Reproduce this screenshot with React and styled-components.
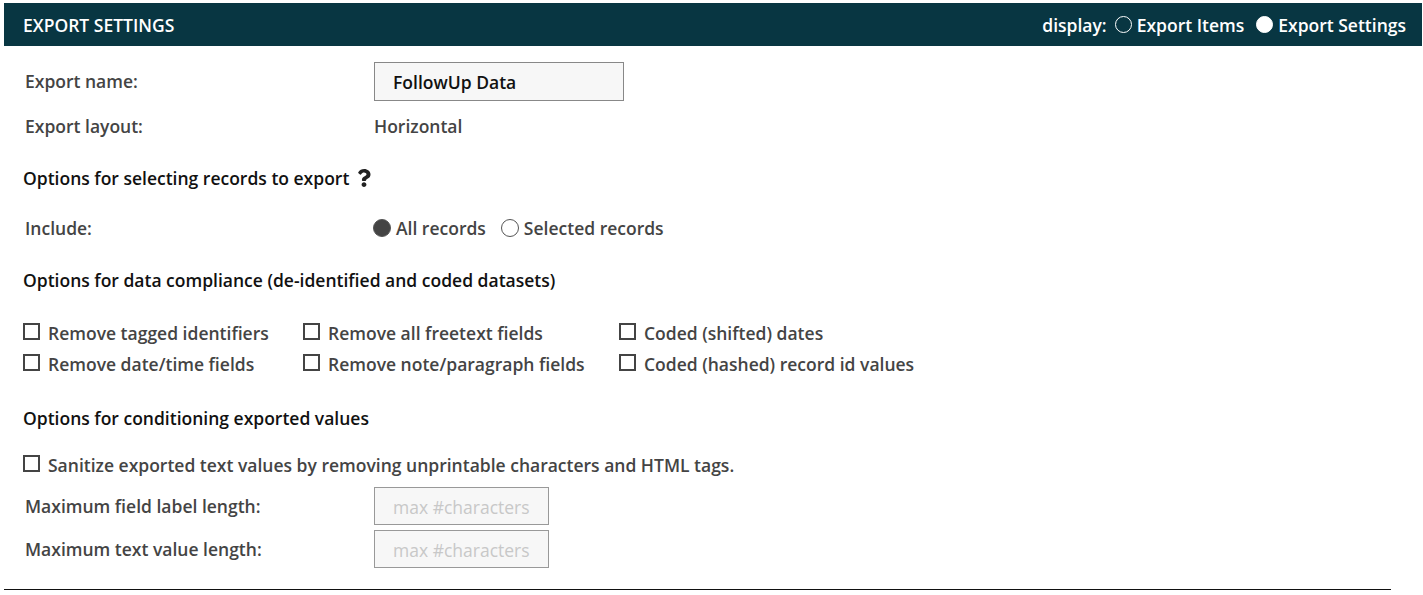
import React from 'react';
import styled, { createGlobalStyle } from 'styled-components';
import { FaQuestion } from 'react-icons/fa';

const GlobalStyle = createGlobalStyle`
    body {
        margin: 0;
        background: #fff;
        font-family: "Open Sans", "Liberation Sans", sans-serif;
    }
`;

const Page = styled.div`
    width: 1423px;
    height: 595px;
    padding: 3px 1px 0 4px;
    box-sizing: border-box;
    overflow: hidden;
`;

const Header = styled.div`
    height: 43px;
    background-color: #083642;
    color: #fff;
    display: flex;
    align-items: center;
    justify-content: space-between;
    padding: 0 16px 0 19px;
    font-size: 17.5px;
    font-weight: 600;
`;

const DisplayToggle = styled.div`
    display: flex;
    align-items: center;
`;

const Radio = styled.span`
    display: inline-block;
    width: ${p => p.$size || 17}px;
    height: ${p => p.$size || 17}px;
    border-radius: 50%;
    box-sizing: border-box;
    border: 1px solid ${p => p.$light ? '#fff' : '#555'};
    background: ${p => p.$on ? (p.$light ? '#fff' : '#444') : 'transparent'};
    margin: 0 5px 0 ${p => p.$gap || 0}px;
`;

const Body = styled.div`
    padding: 16px 0 0 19px;
    color: #444;
    font-size: 17.5px;
    font-weight: 600;
`;

const FieldRow = styled.div`
    display: flex;
    align-items: center;
    height: ${p => p.$h || 38}px;
    margin-top: ${p => p.$mt || 0}px;
    padding-left: 2px;
`;

const Label = styled.div`
    width: 349px;
`;

const TextBox = styled.div`
    width: 250px;
    height: 39px;
    box-sizing: border-box;
    border: 1px solid #888;
    background: #f7f7f7;
    display: flex;
    align-items: center;
    padding: 1px 0 0 18px;
    color: #111;
`;

const SmallBox = styled(TextBox)`
    width: 175px;
    height: 38px;
    font-weight: 500;
    color: #c8c8c8;
    border-color: #999;
`;

const SectionTitle = styled.div`
    color: #111;
    display: flex;
    align-items: center;
    height: 24px;
    margin-top: ${p => p.$mt || 0}px;
    svg {
        margin-left: 6px;
        font-size: 18px;
        color: #222;
    }
`;

const Choice = styled.label`
    display: flex;
    align-items: center;
    margin-right: ${p => p.$mr || 0}px;
`;

const CheckGrid = styled.div`
    display: grid;
    grid-template-columns: 280px 316px auto;
    row-gap: 7px;
    margin-top: 29px;
`;

const Box = styled.span`
    display: inline-block;
    width: 17px;
    height: 17px;
    box-sizing: border-box;
    border: 2px solid #444;
    margin: 0 8px 0 0;
    flex: none;
    position: relative;
    top: -2px;
`;

const Check = styled.div`
    display: flex;
    align-items: center;
    height: 24px;
    margin-top: ${p => p.$mt || 0}px;
`;

const Rule = styled.hr`
    border: none;
    border-top: 1px solid #111;
    margin: 21px 31px 0 -19px;
`;

const checks = [
    'Remove tagged identifiers',
    'Remove all freetext fields',
    'Coded (shifted) dates',
    'Remove date/time fields',
    'Remove note/paragraph fields',
    'Coded (hashed) record id values',
];

const App = () => {
    return (
        <Page>
            <GlobalStyle />
            <Header>
                <span>EXPORT SETTINGS</span>
                <DisplayToggle>
                    display:
                    <Radio $light $gap={8} />Export Items
                    <Radio $light $on $gap={12} />Export Settings
                </DisplayToggle>
            </Header>
            <Body>
                <FieldRow>
                    <Label>Export name:</Label>
                    <TextBox>FollowUp Data</TextBox>
                </FieldRow>
                <FieldRow $mt={7}>
                    <Label>Export layout:</Label>
                    <span>Horizontal</span>
                </FieldRow>
                <SectionTitle $mt={21}>
                    Options for selecting records to export <FaQuestion />
                </SectionTitle>
                <FieldRow $h={50} $mt={13}>
                    <Label>Include:</Label>
                    <Choice $mr={15}><Radio $on $size={18} $gap={-1} />All records</Choice>
                    <Choice><Radio $size={18} />Selected records</Choice>
                </FieldRow>
                <SectionTitle $mt={15}>
                    Options for data compliance (de-identified and coded datasets)
                </SectionTitle>
                <CheckGrid>
                    {checks.map(c => (
                        <Check key={c}><Box />{c}</Check>
                    ))}
                </CheckGrid>
                <SectionTitle $mt={30}>
                    Options for conditioning exported values
                </SectionTitle>
                <Check $mt={23}><Box />Sanitize exported text values by removing unprintable characters and HTML tags.</Check>
                <FieldRow $mt={10}>
                    <Label>Maximum field label length:</Label>
                    <SmallBox>max #characters</SmallBox>
                </FieldRow>
                <FieldRow $mt={5}>
                    <Label>Maximum text value length:</Label>
                    <SmallBox>max #characters</SmallBox>
                </FieldRow>
                <Rule />
            </Body>
        </Page>
    );
};

export default App;
